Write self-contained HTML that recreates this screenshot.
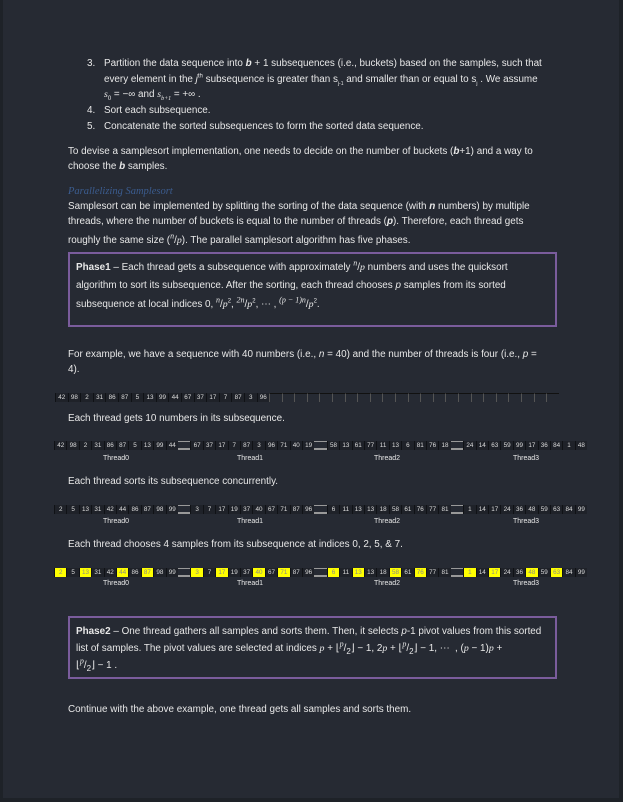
<!DOCTYPE html>
<html><head><meta charset="utf-8"><style>
html,body{margin:0;padding:0}
body{width:623px;height:802px;background:#1e2228;position:relative;overflow:hidden;font-family:"Liberation Sans",sans-serif;color:#e8e8e8}
.page{position:absolute;left:3px;top:0;width:616px;height:798px;background:#262a33}
.t{position:absolute;font-size:9.9px;white-space:nowrap;line-height:12px}
sup,sub{line-height:0;font-size:6px}
.m{font-family:"Liberation Serif",serif;font-style:italic}
.box{position:absolute;border:2px solid #7a5c9c;box-sizing:border-box}
.row{position:absolute;display:flex;height:9px}
.row span{display:block;width:12.4px;height:9px;font-size:6.3px;line-height:9px;text-align:center;background:#1f2229;border-left:1px solid #101216;color:#ddd;box-sizing:border-box}
.row span.g{background:transparent;border:none;border-top:1px solid #999;border-bottom:2px solid #999;width:12.5px}
.row span.y{background:#ffff00;color:#888}
.row span.e{background:transparent;border-left:1px solid #555;border-top:1px solid #111}
.r1 span{width:12.6px}
.lb{position:absolute;font-size:7px;width:60px;text-align:center}
</style></head><body><div class="page"></div>
<div class="t" style="left:87px;top:58px">3.</div>
<div class="t" style="left:104px;top:58px">Partition the data sequence into <b><i>b</i></b> + 1 subsequences (i.e., buckets) based on the samples, such that</div>
<div class="t" style="left:104px;top:74px">every element in the <i>j</i><sup>th</sup> subsequence is greater than s<sub style="font-size:5px">j-1</sub> and smaller than or equal to s<sub style="font-size:5px">j</sub> . We assume</div>
<div class="t" style="left:104px;top:89px"><span class="m">s</span><sub>0</sub> = −∞ and <span class="m">s</span><sub class="m">b+1</sub> = +∞ .</div>
<div class="t" style="left:87px;top:105px">4.</div><div class="t" style="left:104px;top:105px">Sort each subsequence.</div>
<div class="t" style="left:87px;top:121px">5.</div><div class="t" style="left:104px;top:121px">Concatenate the sorted subsequences to form the sorted data sequence.</div>
<div class="t" style="left:68px;top:146px">To devise a samplesort implementation, one needs to decide on the number of buckets (<b><i>b</i></b>+1) and a way to</div>
<div class="t" style="left:68px;top:161px">choose the <b><i>b</i></b> samples.</div>
<div class="t" style="left:68px;top:186px;color:#3b5c8f;font-family:'Liberation Serif',serif;font-style:italic;font-size:10.5px">Parallelizing Samplesort</div>
<div class="t" style="left:68px;top:201px">Samplesort can be implemented by splitting the sorting of the data sequence (with <b><i>n</i></b> numbers) by multiple</div>
<div class="t" style="left:68px;top:216px">threads, where the number of buckets is equal to the number of threads (<b><i>p</i></b>). Therefore, each thread gets</div>
<div class="t" style="left:68px;top:235px">roughly the same size (<sup class="m" style="font-size:8px">n</sup>/<span class="m">p</span>). The parallel samplesort algorithm has five phases.</div>
<div class="box" style="left:68px;top:252px;width:489px;height:75px"></div>
<div class="t" style="left:76px;top:262px"><b>Phase1</b> – Each thread gets a subsequence with approximately <sup class="m" style="font-size:8px">n</sup>/<span class="m">p</span> numbers and uses the quicksort</div>
<div class="t" style="left:76px;top:280px">algorithm to sort its subsequence. After the sorting, each thread chooses <i>p</i> samples from its sorted</div>
<div class="t" style="left:76px;top:299px">subsequence at local indices 0, <sup class="m" style="font-size:8px">n</sup>/<span class="m">p</span><sup>2</sup>, <sup class="m" style="font-size:8px">2n</sup>/<span class="m">p</span><sup>2</sup>, ⋯ , <sup class="m" style="font-size:8px">(p − 1)n</sup>/<span class="m">p</span><sup>2</sup>.</div>
<div class="t" style="left:68px;top:349px">For example, we have a sequence with 40 numbers (i.e., <i>n</i> = 40) and the number of threads is four (i.e., <i>p</i> =</div>
<div class="t" style="left:68px;top:364px">4).</div>
<div class="row r1" style="left:55px;top:393px">
<span>42</span><span>98</span><span>2</span><span>31</span><span>86</span><span>87</span><span>5</span><span>13</span><span>99</span><span>44</span><span>67</span><span>37</span><span>17</span><span>7</span><span>87</span><span>3</span><span>96</span><span class="e"></span><span class="e"></span><span class="e"></span><span class="e"></span><span class="e"></span><span class="e"></span><span class="e"></span><span class="e"></span><span class="e"></span><span class="e"></span><span class="e"></span><span class="e"></span><span class="e"></span><span class="e"></span><span class="e"></span><span class="e"></span><span class="e"></span><span class="e"></span><span class="e"></span><span class="e"></span><span class="e"></span><span class="e"></span><span class="e"></span></div>
<div class="t" style="left:68px;top:413px">Each thread gets 10 numbers in its subsequence.</div>
<div class="row" style="left:54px;top:441px">
<span>42</span><span>98</span><span>2</span><span>31</span><span>86</span><span>87</span><span>5</span><span>13</span><span>99</span><span>44</span><span class="g"></span><span>67</span><span>37</span><span>17</span><span>7</span><span>87</span><span>3</span><span>96</span><span>71</span><span>40</span><span>19</span><span class="g"></span><span>58</span><span>13</span><span>61</span><span>77</span><span>11</span><span>13</span><span>6</span><span>81</span><span>76</span><span>18</span><span class="g"></span><span>24</span><span>14</span><span>63</span><span>59</span><span>99</span><span>17</span><span>36</span><span>84</span><span>1</span><span>48</span></div>
<div class="lb" style="left:86px;top:455px">Thread0</div><div class="lb" style="left:220px;top:455px">Thread1</div><div class="lb" style="left:357px;top:455px">Thread2</div><div class="lb" style="left:496px;top:455px">Thread3</div>
<div class="t" style="left:68px;top:476px">Each thread sorts its subsequence concurrently.</div>
<div class="row" style="left:54px;top:505px">
<span>2</span><span>5</span><span>13</span><span>31</span><span>42</span><span>44</span><span>86</span><span>87</span><span>98</span><span>99</span><span class="g"></span><span>3</span><span>7</span><span>17</span><span>19</span><span>37</span><span>40</span><span>67</span><span>71</span><span>87</span><span>96</span><span class="g"></span><span>6</span><span>11</span><span>13</span><span>13</span><span>18</span><span>58</span><span>61</span><span>76</span><span>77</span><span>81</span><span class="g"></span><span>1</span><span>14</span><span>17</span><span>24</span><span>36</span><span>48</span><span>59</span><span>63</span><span>84</span><span>99</span></div>
<div class="lb" style="left:86px;top:518px">Thread0</div><div class="lb" style="left:220px;top:518px">Thread1</div><div class="lb" style="left:357px;top:518px">Thread2</div><div class="lb" style="left:496px;top:518px">Thread3</div>
<div class="t" style="left:68px;top:539px">Each thread chooses 4 samples from its subsequence at indices 0, 2, 5, &amp; 7.</div>
<div class="row" style="left:54px;top:568px">
<span class="y">2</span><span>5</span><span class="y">13</span><span>31</span><span>42</span><span class="y">44</span><span>86</span><span class="y">87</span><span>98</span><span>99</span><span class="g"></span><span class="y">3</span><span>7</span><span class="y">17</span><span>19</span><span>37</span><span class="y">40</span><span>67</span><span class="y">71</span><span>87</span><span>96</span><span class="g"></span><span class="y">6</span><span>11</span><span class="y">13</span><span>13</span><span>18</span><span class="y">58</span><span>61</span><span class="y">76</span><span>77</span><span>81</span><span class="g"></span><span class="y">1</span><span>14</span><span class="y">17</span><span>24</span><span>36</span><span class="y">48</span><span>59</span><span class="y">63</span><span>84</span><span>99</span></div>
<div class="lb" style="left:86px;top:580px">Thread0</div><div class="lb" style="left:220px;top:580px">Thread1</div><div class="lb" style="left:357px;top:580px">Thread2</div><div class="lb" style="left:496px;top:580px">Thread3</div>
<div class="box" style="left:68px;top:616px;width:489px;height:63px"></div>
<div class="t" style="left:76px;top:626px"><b>Phase2</b> – One thread gathers all samples and sorts them. Then, it selects <i>p</i>-1 pivot values from this sorted</div>
<div class="t" style="left:76px;top:643px">list of samples. The pivot values are selected at indices <span class="m">p</span> + ⌊<sup class="m" style="font-size:8px">p</sup>/<sub style="font-size:8px">2</sub>⌋ − 1, 2<span class="m">p</span> + ⌊<sup class="m" style="font-size:8px">p</sup>/<sub style="font-size:8px">2</sub>⌋ − 1, ⋯ &nbsp;, (<span class="m">p</span> − 1)<span class="m">p</span> +</div>
<div class="t" style="left:76px;top:660px">⌊<sup class="m" style="font-size:8px">p</sup>/<sub style="font-size:8px">2</sub>⌋ − 1 .</div>
<div class="t" style="left:68px;top:704px">Continue with the above example, one thread gets all samples and sorts them.</div>
</body></html>
